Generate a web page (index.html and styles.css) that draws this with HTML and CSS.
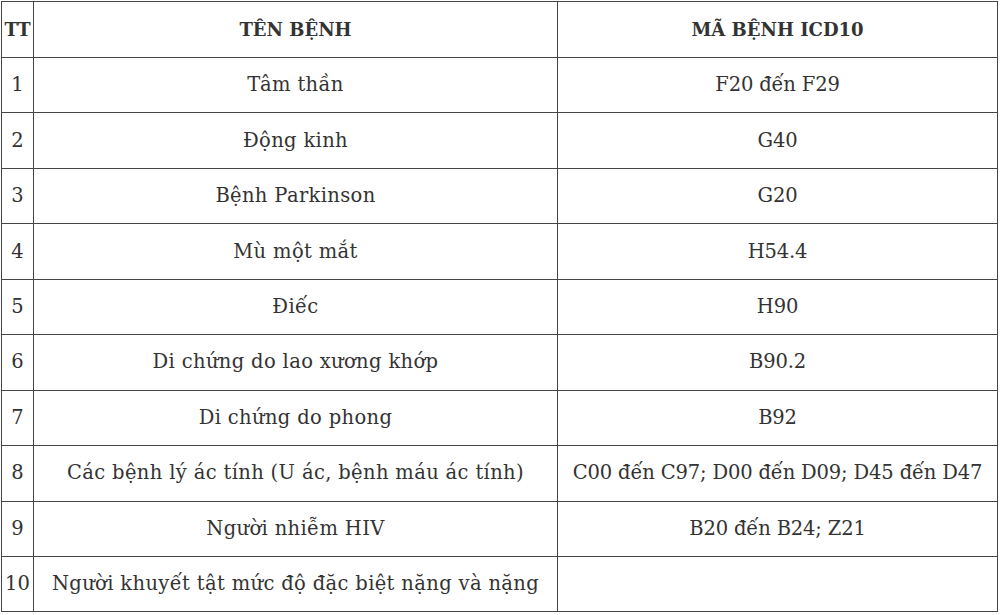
FILE: index.html
```html
<!DOCTYPE html>
<html lang="vi">
<head>
<meta charset="utf-8">
<title>Bảng mã bệnh ICD10</title>
<link rel="stylesheet" href="styles.css">
</head>
<body>
<table class="icd">
  <colgroup>
    <col class="c-tt">
    <col class="c-name">
    <col class="c-code">
  </colgroup>
  <thead>
    <tr><th>TT</th><th>TÊN BỆNH</th><th>MÃ BỆNH ICD10</th></tr>
  </thead>
  <tbody>
    <tr><td>1</td><td>Tâm thần</td><td>F20 đến F29</td></tr>
    <tr><td>2</td><td>Động kinh</td><td>G40</td></tr>
    <tr><td>3</td><td>Bệnh Parkinson</td><td>G20</td></tr>
    <tr><td>4</td><td>Mù một mắt</td><td>H54.4</td></tr>
    <tr><td>5</td><td>Điếc</td><td>H90</td></tr>
    <tr><td>6</td><td>Di chứng do lao xương khớp</td><td>B90.2</td></tr>
    <tr><td>7</td><td>Di chứng do phong</td><td>B92</td></tr>
    <tr><td>8</td><td>Các bệnh lý ác tính (U ác, bệnh máu ác tính)</td><td>C00 đến C97; D00 đến D09; D45 đến D47</td></tr>
    <tr><td>9</td><td>Người nhiễm HIV</td><td>B20 đến B24; Z21</td></tr>
    <tr><td>10</td><td>Người khuyết tật mức độ đặc biệt nặng và nặng</td><td></td></tr>
  </tbody>
</table>
</body>
</html>
```
FILE: styles.css
```css
html, body {
  margin: 0;
  padding: 0;
  background: #ffffff;
}
body {
  padding: 1px 0 0 1px;
  font-family: "DejaVu Serif", "Liberation Serif", serif;
  color: #333333;
}
.icd {
  border-collapse: collapse;
  table-layout: fixed;
  width: 996px;
}
.c-tt { width: 32px; }
.c-name { width: 524px; }
.c-code { width: 440px; }
.icd th,
.icd td {
  border: 1px solid #454545;
  padding: 0;
  height: 54.45px;
  text-align: center;
  vertical-align: middle;
  white-space: nowrap;
}
.icd td {
  font-size: 19.5px;
  line-height: 24px;
}
.icd td:nth-child(2) {
  letter-spacing: 0.35px;
}
.icd td:nth-child(3) {
  letter-spacing: -0.15px;
}
.icd th {
  font-size: 18px;
  line-height: 22px;
  font-weight: bold;
  height: 55px;
}
```
